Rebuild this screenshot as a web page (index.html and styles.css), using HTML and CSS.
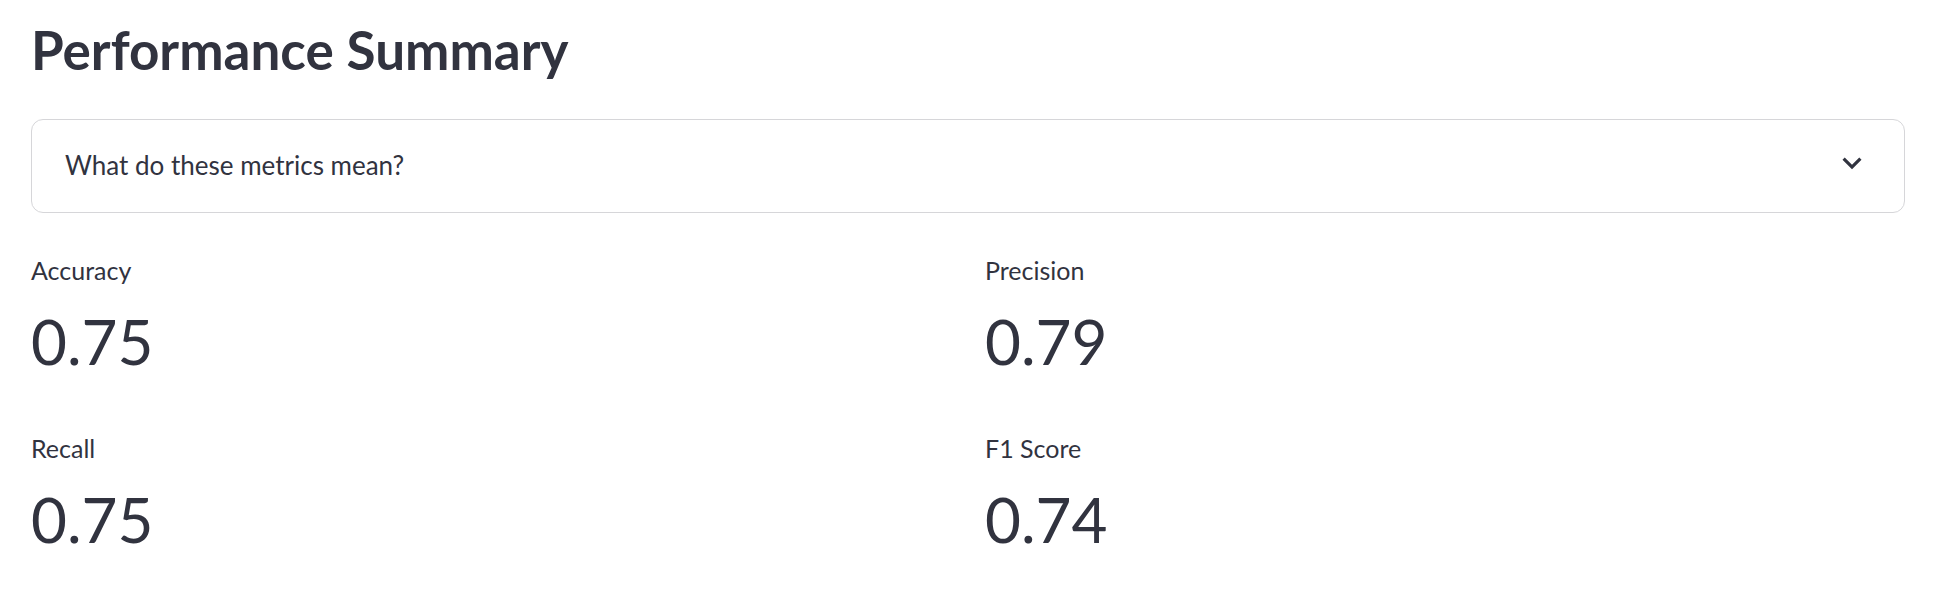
FILE: index.html
```html
<!DOCTYPE html>
<html lang="en">
<head>
<meta charset="utf-8">
<title>Performance Summary</title>
<link rel="stylesheet" href="styles.css">
</head>
<body>
<main class="main">
  <h2 class="title">Performance Summary</h2>
  <details class="expander">
    <summary class="expander-summary">
      <span class="expander-label">What do these metrics mean?</span>
      <svg class="chevron" viewBox="0 0 24 24" width="38" height="38" aria-hidden="true">
        <path d="M16.59 8.59L12 13.17 7.41 8.59 6 10l6 6 6-6z" fill="currentColor"/>
      </svg>
    </summary>
  </details>
  <section class="metrics">
    <div class="metric">
      <div class="metric-label">Accuracy</div>
      <div class="metric-value">0.75</div>
    </div>
    <div class="metric">
      <div class="metric-label">Precision</div>
      <div class="metric-value">0.79</div>
    </div>
    <div class="metric">
      <div class="metric-label">Recall</div>
      <div class="metric-value">0.75</div>
    </div>
    <div class="metric">
      <div class="metric-label">F1 Score</div>
      <div class="metric-value">0.74</div>
    </div>
  </section>
</main>
</body>
</html>
```
FILE: styles.css
```css
html, body {
  margin: 0;
  padding: 0;
  background: #ffffff;
}

body {
  font-family: "Lato", "Noto Sans", sans-serif;
  color: #31333f;
}

.main {
  padding: 18px 33px 0 31px;
}

.title {
  margin: 0;
  font-size: 53px;
  font-weight: 700;
  line-height: 1.2;
  letter-spacing: 0;
}

.expander {
  margin-top: 37px;
  border: 1px solid #d6d6d9;
  border-radius: 12px;
}

.expander-summary {
  list-style: none;
  height: 92px;
  display: flex;
  align-items: center;
  justify-content: space-between;
  padding: 0 33px;
  cursor: pointer;
}

.expander-summary::-webkit-details-marker {
  display: none;
}

.expander-label {
  font-size: 26px;
  line-height: 1.2;
}

.chevron {
  display: block;
  color: #31333f;
  margin-bottom: 6px;
}

.metrics {
  margin-top: 42px;
  display: grid;
  grid-template-columns: 1fr 1fr;
  column-gap: 34px;
  row-gap: 55px;
}

.metric {
  display: flex;
  flex-direction: column;
}

.metric-label {
  font-size: 25px;
  line-height: 1.2;
}

.metric-value {
  margin-top: 19px;
  font-size: 62px;
  line-height: 1.2;
}
```
